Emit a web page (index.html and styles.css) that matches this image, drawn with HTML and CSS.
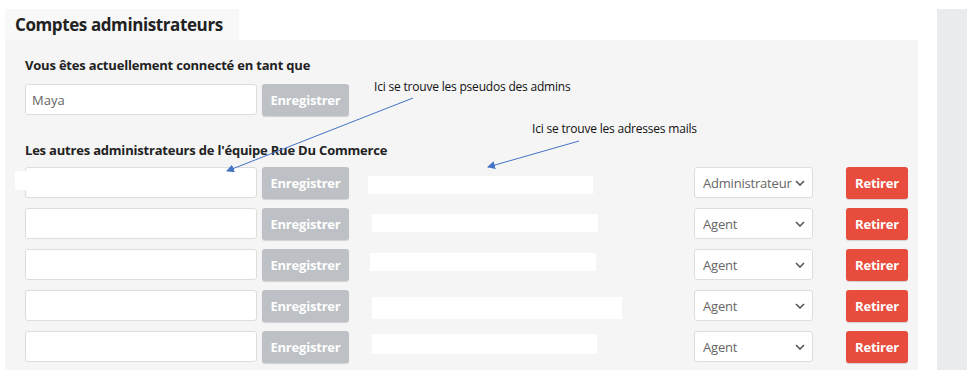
FILE: index.html
```html
<!DOCTYPE html>
<html lang="fr">
<head>
    <meta charset="UTF-8">
    <title>Comptes administrateurs</title>
    <link rel="stylesheet" href="styles.css">
</head>
<body>
    <div class="page">
        <div class="main">
            <div class="tab">Comptes administrateurs</div>
            <div class="panel">
                <h2 class="label">Vous êtes actuellement connecté en tant que</h2>
                <div class="row">
                    <input class="field" type="text" value="Maya">
                    <button class="btn btn-save">Enregistrer</button>
                </div>

                <h2 class="label label-others">Les autres administrateurs de l'équipe Rue Du Commerce</h2>

                <div class="row admin">
                    <span class="mask-left"></span>
                    <input class="field" type="text">
                    <button class="btn btn-save">Enregistrer</button>
                    <div class="mail"><span class="mask" style="width:225px;margin-top:9px"></span></div>
                    <select class="role"><option>Administrateur</option><option>Agent</option></select>
                    <button class="btn btn-remove">Retirer</button>
                </div>
                <div class="row admin">
                    <input class="field" type="text">
                    <button class="btn btn-save">Enregistrer</button>
                    <div class="mail"><span class="mask" style="width:226px;margin-top:6px;margin-left:4px"></span></div>
                    <select class="role"><option>Agent</option><option>Administrateur</option></select>
                    <button class="btn btn-remove">Retirer</button>
                </div>
                <div class="row admin">
                    <input class="field" type="text">
                    <button class="btn btn-save">Enregistrer</button>
                    <div class="mail"><span class="mask" style="width:226px;margin-top:4px;margin-left:2px"></span></div>
                    <select class="role"><option>Agent</option><option>Administrateur</option></select>
                    <button class="btn btn-remove">Retirer</button>
                </div>
                <div class="row admin">
                    <input class="field" type="text">
                    <button class="btn btn-save">Enregistrer</button>
                    <div class="mail"><span class="mask" style="width:250px;margin-top:7px;margin-left:4px;height:22px"></span></div>
                    <select class="role"><option>Agent</option><option>Administrateur</option></select>
                    <button class="btn btn-remove">Retirer</button>
                </div>
                <div class="row admin">
                    <input class="field" type="text">
                    <button class="btn btn-save">Enregistrer</button>
                    <div class="mail"><span class="mask" style="width:225px;margin-top:3px;margin-left:4px;height:20px"></span></div>
                    <select class="role"><option>Agent</option><option>Administrateur</option></select>
                    <button class="btn btn-remove">Retirer</button>
                </div>
            </div>

            <!-- annotations drawn over the screenshot -->
            <div class="note note-pseudo">Ici se trouve les pseudos des admins</div>
            <div class="note note-mail">Ici se trouve les adresses mails</div>
            <svg class="arrows" width="967" height="376" viewBox="0 0 967 376">
                <defs>
                    <marker id="head" markerWidth="8" markerHeight="8" refX="7" refY="4" orient="auto" markerUnits="userSpaceOnUse">
                        <path d="M0,0 L8,4 L0,8 Z" fill="#4472c4"/>
                    </marker>
                </defs>
                <line x1="413" y1="98" x2="227" y2="171" stroke="#4472c4" stroke-width="1" marker-end="url(#head)"/>
                <line x1="579" y1="141" x2="488" y2="167" stroke="#4472c4" stroke-width="1" marker-end="url(#head)"/>
            </svg>
        </div>
        <div class="side"></div>
    </div>
</body>
</html>
```

FILE: styles.css
```css
body {
    margin: 0;
    background: #fff;
    font-family: 'Open Sans', 'Noto Sans', sans-serif;
    color: #333;
}

.page {
    display: flex;
    gap: 19px;
    padding: 9px 0 0 5px;
    height: 361px;
}

.main {
    width: 913px;
    display: flex;
    flex-direction: column;
}

.tab {
    align-self: flex-start;
    width: 224px;
    height: 32px;
    padding-left: 10px;
    line-height: 31px;
    font-size: 17px;
    font-weight: 700;
    letter-spacing: -0.4px;
    color: #222;
    background: #f8f8f8;
}

.panel {
    flex: 1;
    background: #f5f5f5;
    padding: 16px 10px 0 20px;
}

.label {
    margin: 0 0 10px 0;
    font-size: 13px;
    font-weight: 700;
    letter-spacing: -0.2px;
    color: #222;
    line-height: 18px;
}

.label-others {
    margin-top: 26px;
    margin-bottom: 8px;
}

.row {
    position: relative;
    display: flex;
    align-items: flex-start;
    height: 31px;
    margin-bottom: 10px;
}

.admin + .admin {
    margin-top: 0.3px;
}

.row > * {
    flex-shrink: 0;
}

.field {
    width: 232px;
    height: 31px;
    box-sizing: border-box;
    border: 1px solid #ddd;
    border-radius: 3px;
    background: #fff;
    padding: 0 6px;
    font-family: inherit;
    font-size: 13px;
    color: #666;
    outline: none;
}

.btn {
    height: 32px;
    border: none;
    border-radius: 3px;
    color: #fff;
    font-family: inherit;
    font-size: 13px;
    font-weight: 700;
    letter-spacing: -0.2px;
    padding: 0;
    box-shadow: 0 1px 1px rgba(0, 0, 0, 0.15);
}

.btn-save {
    width: 87px;
    margin-left: 5px;
    background: #bdc1c5;
}

.btn-remove {
    width: 62px;
    margin-left: 33px;
    background: #e74c3c;
}

.mail {
    width: 326px;
    height: 31px;
    margin-left: 19px;
}

.mask {
    display: block;
    height: 18px;
    background: #fff;
}

.mask-left {
    position: absolute;
    left: -10px;
    top: 4px;
    width: 12px;
    height: 19px;
    background: #fff;
}

.role {
    width: 119px;
    height: 31px;
    box-sizing: border-box;
    border: 1px solid #ddd;
    border-radius: 3px;
    background: #fff url("data:image/svg+xml,%3Csvg xmlns='http://www.w3.org/2000/svg' width='10' height='6'%3E%3Cpath d='M1 1l4 4 4-4' fill='none' stroke='%23555' stroke-width='1.6'/%3E%3C/svg%3E") no-repeat right 7px center;
    -webkit-appearance: none;
    appearance: none;
    font-family: inherit;
    font-size: 13px;
    letter-spacing: -0.2px;
    color: #666;
    padding: 0 18px 0 8px;
}

.note {
    position: absolute;
    font-family: 'Open Sans', sans-serif;
    font-size: 12px;
    letter-spacing: -0.2px;
    color: #111;
}

.note-pseudo { left: 374px; top: 78px; }
.note-mail { left: 532px; top: 120px; }

.arrows {
    position: absolute;
    left: 0;
    top: 0;
    pointer-events: none;
}

.side {
    width: 30px;
    height: 361px;
    background: #e9ecec;
}
```
